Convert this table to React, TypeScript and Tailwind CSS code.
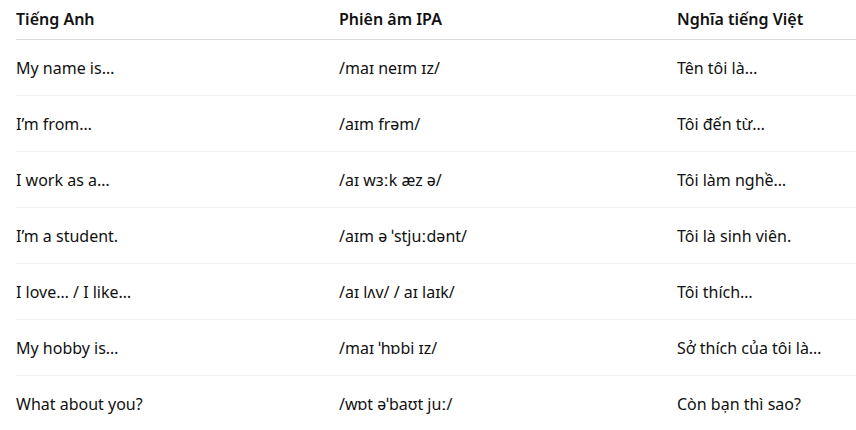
const rows: [string, string, string][] = [
  ["My name is…", "/maɪ neɪm ɪz/", "Tên tôi là…"],
  ["I’m from…", "/aɪm frəm/", "Tôi đến từ…"],
  ["I work as a…", "/aɪ wɜːk æz ə/", "Tôi làm nghề…"],
  ["I’m a student.", "/aɪm ə ˈstjuːdənt/", "Tôi là sinh viên."],
  ["I love… / I like…", "/aɪ lʌv/ / aɪ laɪk/", "Tôi thích…"],
  ["My hobby is…", "/maɪ ˈhɒbi ɪz/", "Sở thích của tôi là…"],
  ["What about you?", "/wɒt əˈbaʊt juː/", "Còn bạn thì sao?"],
];

export default function App() {
  return (
    <div className="min-h-screen bg-white pl-4 font-['Noto_Sans',sans-serif] text-[16px] text-[#111]">
      <div className="grid grid-cols-[323px_338px_1fr] h-[40px] items-center border-b border-[#d9d9d9] pb-[2px] font-semibold">
        <div>Tiếng Anh</div>
        <div>Phiên âm IPA</div>
        <div>Nghĩa tiếng Việt</div>
      </div>
      {rows.map(([en, ipa, vi], i) => (
        <div
          key={i}
          className="grid grid-cols-[323px_338px_1fr] h-[56px] items-center border-b border-[#f0f0f0]"
        >
          <div>{en}</div>
          <div>{ipa}</div>
          <div>{vi}</div>
        </div>
      ))}
    </div>
  );
}
